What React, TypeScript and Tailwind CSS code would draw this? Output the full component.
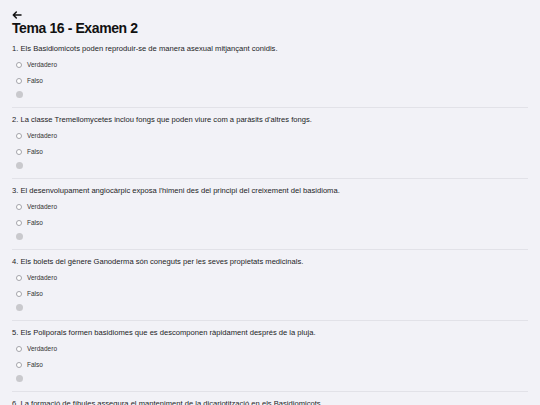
import React from 'react';

const QUESTIONS = [
  'Els Basidiomicots poden reproduir-se de manera asexual mitjançant conidis.',
  "La classe Tremellomycetes inclou fongs que poden viure com a paràsits d'altres fongs.",
  "El desenvolupament angiocàrpic exposa l'himeni des del principi del creixement del basidioma.",
  'Els bolets del gènere Ganoderma són coneguts per les seves propietats medicinals.',
  'Els Poliporals formen basidiomes que es descomponen ràpidament després de la pluja.',
  'La formació de fíbules assegura el manteniment de la dicariotització en els Basidiomicots.',
];

const Option: React.FC<{ label: string; className?: string }> = ({ label, className }) => (
  <label className={`flex h-[12px] items-center ${className ?? ''}`}>
    <span className="ml-[4px] h-[6px] w-[6px] rounded-full border-[0.5px] border-[#a4a4aa] bg-white" />
    <span className="ml-[5px] text-[6.5px] text-[#333]">{label}</span>
  </label>
);

const Question: React.FC<{ index: number; text: string }> = ({ index, text }) => (
  <div className="border-b border-[#e2e2e8] pt-[6px] pb-[7px] first:pt-0">
    <p className="flex h-[12px] items-center text-[7.6px] whitespace-nowrap text-[#1c1c1e]">
      {index + 1}. {text}
    </p>
    <Option label="Verdadero" className="mt-[4px]" />
    <Option label="Falso" className="mt-[4px]" />
    <div className="mt-[1px] flex h-[12px] items-center">
      <span className="ml-[3.5px] h-[7px] w-[7px] rounded-full bg-[#c9c9cd]" />
    </div>
  </div>
);

const App: React.FC = () => {
  return (
    <div className="h-screen overflow-hidden bg-[#f2f2f7] px-3 pt-[10px] font-['Liberation_Sans',Arial,sans-serif] text-[#111]">
      <button className="flex h-[10px] items-center">
        <svg width="10" height="8" viewBox="0 0 10 8" fill="none" stroke="#111" strokeWidth="1.5" strokeLinecap="round" strokeLinejoin="round">
          <path d="M9 4H1.3M4.3 1L1.3 4l3 3" />
        </svg>
      </button>
      <h1 className="mt-[1px] h-[14px] text-[14px] leading-[14px] font-bold tracking-[-0.4px]">Tema 16 - Examen 2</h1>
      <div className="mt-[8px]">
        {QUESTIONS.map((q, i) => (
          <Question key={i} index={i} text={q} />
        ))}
      </div>
    </div>
  );
};

export default App;
